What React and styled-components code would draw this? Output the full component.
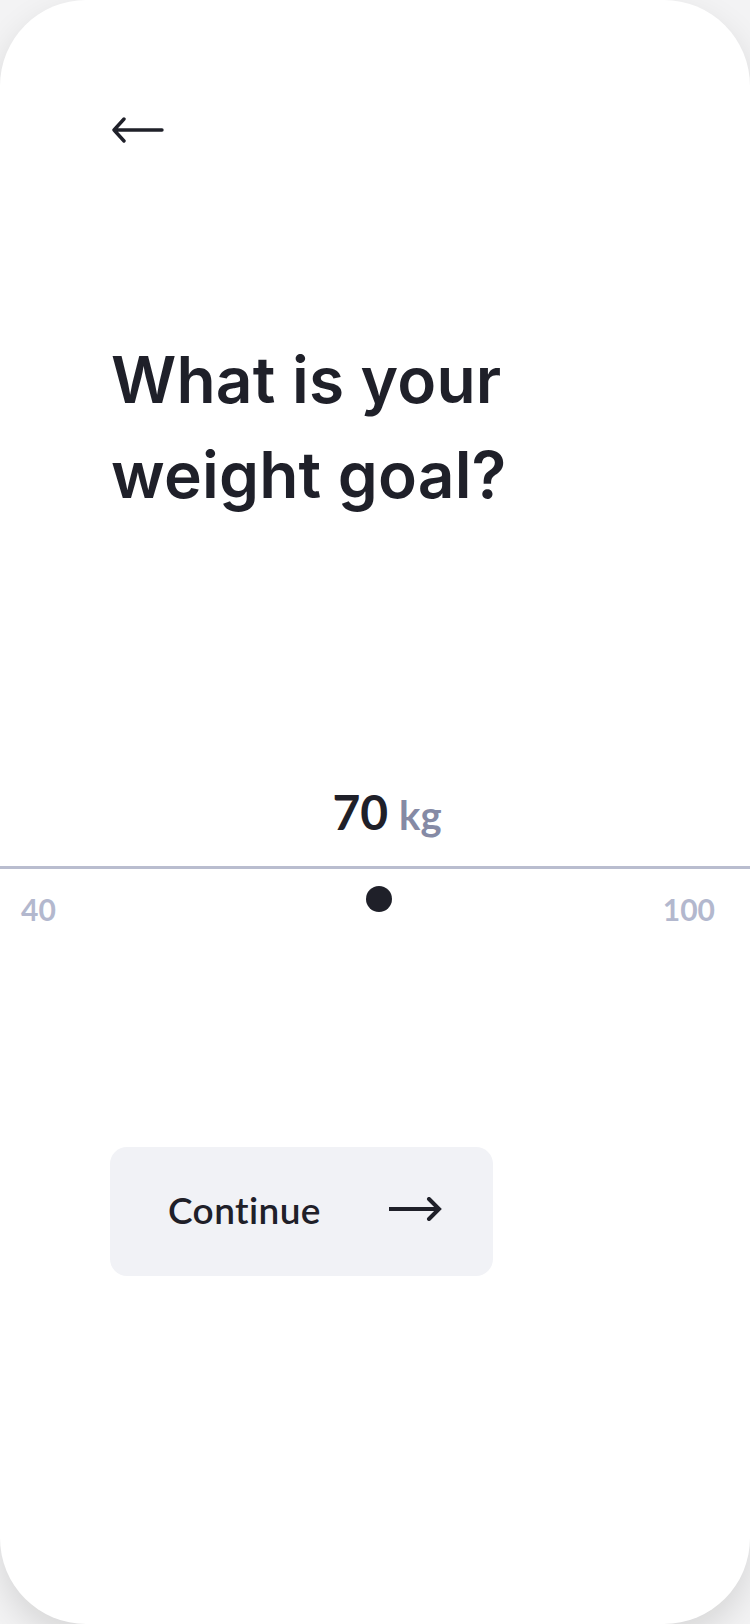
import styled, { createGlobalStyle } from "styled-components";

const GlobalStyle = createGlobalStyle`
  html, body {
    margin: 0;
    padding: 0;
    background: #f3f3f4;
  }
  * {
    box-sizing: border-box;
  }
`;

const Card = styled.div`
  width: 750px;
  height: 1624px;
  background: #ffffff;
  border-radius: 86px;
  box-shadow: 0 14px 34px rgba(0, 0, 0, 0.12);
  overflow: hidden;
  display: flex;
  flex-direction: column;
  font-family: "Lato", "Noto Sans", sans-serif;
  color: #1f2029;
`;

const Content = styled.div`
  padding-left: 111px;
`;

const BackButton = styled.button`
  margin-top: 117px;
  padding: 0;
  border: none;
  background: none;
  cursor: pointer;
  display: flex;
  width: 54px;
  height: 26px;
`;

const Title = styled.h1`
  margin: 189px 0 0;
  font-family: "Inter", "Noto Sans", sans-serif;
  font-weight: 600;
  font-size: 64px;
  line-height: 95px;
  letter-spacing: 0.2px;
  color: #1f2029;
`;

const Slider = styled.div`
  margin-top: 266px;
  position: relative;
`;

const ValueLabel = styled.div`
  display: flex;
  justify-content: center;
  align-items: baseline;
  padding-left: 24px;
  line-height: 1;
`;

const Value = styled.span`
  font-size: 48px;
  font-weight: 700;
  color: #1f2029;
`;

const Unit = styled.span`
  margin-left: 11px;
  font-size: 40px;
  font-weight: 700;
  color: #858aa5;
`;

const Track = styled.div`
  margin-top: 30px;
  height: 3px;
  background: #b9bdcf;
  position: relative;
`;

const Thumb = styled.div`
  position: absolute;
  top: 20px;
  width: 26px;
  height: 26px;
  margin-left: -13px;
  border-radius: 50%;
  background: #1f2029;
`;

const Bounds = styled.div`
  margin-top: 25px;
  display: flex;
  justify-content: space-between;
  padding: 0 35px 0 21px;
  font-size: 30px;
  font-weight: 700;
  line-height: 1;
  color: #b3b8ce;
`;

const ContinueButton = styled.button`
  margin: 223px 0 0 110px;
  width: 383px;
  height: 129px;
  border: none;
  border-radius: 17px;
  background: #f1f2f6;
  display: flex;
  align-items: center;
  padding: 0 0 5px 58px;
  gap: 68px;
  cursor: pointer;
  font-family: "Lato", "Noto Sans", sans-serif;
  font-size: 37px;
  font-weight: 600;
  color: #1f2029;
  letter-spacing: 0.4px;
`;

function ArrowLeft() {
  return (
    <svg width="54" height="26" viewBox="0 0 54 26" fill="none">
      <path
        d="M3 13H51M13 2L3 13L13 24"
        stroke="#1f2029"
        strokeWidth="3.4"
        strokeLinecap="round"
        strokeLinejoin="round"
      />
    </svg>
  );
}

function ArrowRight() {
  return (
    <svg width="53" height="24" viewBox="0 0 53 24" fill="none">
      <path d="M0 12H49" stroke="#1f2029" strokeWidth="4.2" />
      <path
        d="M40 2L50 12L40 22"
        stroke="#1f2029"
        strokeWidth="4"
        strokeLinecap="round"
        strokeLinejoin="miter"
      />
    </svg>
  );
}

const min = 40;
const max = 100;
const value = 70;

export default function App() {
  const pct = ((value - min) / (max - min)) * 100;
  return (
    <>
      <GlobalStyle />
      <Card>
        <Content>
          <BackButton aria-label="Back">
            <ArrowLeft />
          </BackButton>
          <Title>
            What is your
            <br />
            weight goal?
          </Title>
        </Content>
        <Slider>
          <ValueLabel>
            <Value>{value}</Value>
            <Unit>kg</Unit>
          </ValueLabel>
          <Track>
            <Thumb style={{ left: `calc(${pct}% + 4px)` }} />
          </Track>
          <Bounds>
            <span>{min}</span>
            <span>{max}</span>
          </Bounds>
        </Slider>
        <ContinueButton>
          <span>Continue</span>
          <ArrowRight />
        </ContinueButton>
      </Card>
    </>
  );
}
